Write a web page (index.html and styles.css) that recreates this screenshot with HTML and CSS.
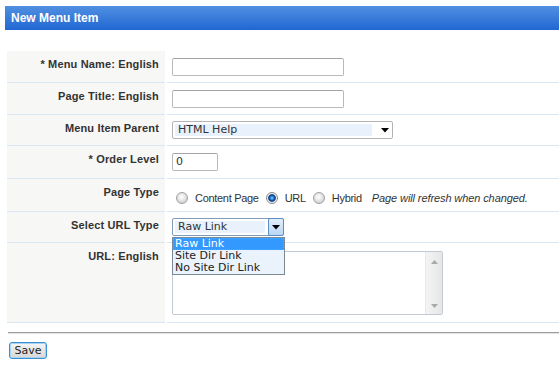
FILE: index.html
```html
<!DOCTYPE html>
<html>
<head>
<meta charset="utf-8">
<link rel="stylesheet" href="styles.css">
</head>
<body>
<div class="page">
  <div class="header">New Menu Item</div>
  <div class="form">
    <div class="label">* Menu Name: English</div>
    <div class="value"><div class="text-input wide"></div></div>

    <div class="label">Page Title: English</div>
    <div class="value"><div class="text-input wide"></div></div>

    <div class="label">Menu Item Parent</div>
    <div class="value">
      <div class="select parent">
        <span class="select-text">HTML Help</span>
        <span class="select-arrow"><svg width="8" height="5" viewBox="0 0 8 5"><path d="M0 0H8L4 4.5Z" fill="#000"/></svg></span>
      </div>
    </div>

    <div class="label">* Order Level</div>
    <div class="value"><div class="text-input short">0</div></div>

    <div class="label">Page Type</div>
    <div class="value radios">
      <span class="radio first"></span><span class="opt">Content Page</span>
      <span class="radio checked"></span><span class="opt">URL</span>
      <span class="radio"></span><span class="opt">Hybrid</span>
      <span class="note">Page will refresh when changed.</span>
    </div>

    <div class="label">Select URL Type</div>
    <div class="value">
      <div class="select url-type">
        <span class="select-text">Raw Link</span>
        <span class="select-arrow boxed"><svg width="8" height="5" viewBox="0 0 8 5"><path d="M0 0H8L4 4.5Z" fill="#000"/></svg></span>
        <div class="dropdown">
          <div class="item active">Raw Link</div>
          <div class="item">Site Dir Link</div>
          <div class="item">No Site Dir Link</div>
        </div>
      </div>
    </div>

    <div class="label">URL: English</div>
    <div class="value top">
      <div class="textarea">
        <div class="scrollbar">
          <svg width="7" height="4" viewBox="0 0 7 4"><path d="M0 4H7L3.5 0Z" fill="#a8a8a8"/></svg>
          <svg width="7" height="4" viewBox="0 0 7 4"><path d="M0 0H7L3.5 4Z" fill="#a8a8a8"/></svg>
        </div>
      </div>
    </div>
  </div>
  <div class="rule"></div>
  <button class="save">Save</button>
</div>
</body>
</html>
```
FILE: styles.css
```css
html, body {
  margin: 0;
  padding: 0;
  background: #fff;
}
body {
  font-family: "Liberation Sans", Arial, sans-serif;
  font-size: 11px;
  color: #333;
}
.page {
  width: 559px;
}
.header {
  margin: 6px 0 0 5px;
  height: 24px;
  line-height: 24px;
  padding-left: 6px;
  background: linear-gradient(#5090e1, #2167d3);
  color: #fff;
  font-weight: bold;
  font-size: 12px;
}
.form {
  margin: 21px 0 0 7px;
  display: grid;
  grid-template-columns: 158px 1fr;
  grid-template-rows: 32px 32px 31px 33px 33px 31px 80px;
  column-gap: 2px;
}
.label, .value {
  box-sizing: border-box;
  border-bottom: 1px solid #dbe6f3;
}
.label {
  background: #f7f7f5;
  text-align: right;
  font-weight: bold;
  line-height: 13px;
  letter-spacing: 0.15px;
  padding: 7px 6px 0 0;
  color: #333;
}
.value {
  display: flex;
  align-items: center;
  padding-left: 5px;
}
.value.top {
  align-items: flex-start;
  padding-top: 8px;
}
.text-input {
  box-sizing: border-box;
  height: 18px;
  border: 1px solid #b8b8b8;
  border-top-color: #a4a4a4;
  border-radius: 2px;
  background: #fff;
  font-family: "DejaVu Sans", Verdana, sans-serif;
  font-size: 11px;
  line-height: 16px;
  padding-left: 3px;
  color: #333;
}
.text-input.wide { width: 172px; }
.text-input.short { width: 46px; }

.select {
  position: relative;
  box-sizing: border-box;
  height: 18px;
  border: 1px solid #b4b4b4;
  border-radius: 2px;
  background: #fff;
  display: flex;
  align-items: center;
  font-family: "DejaVu Sans", Verdana, sans-serif;
  font-size: 11px;
  color: #333;
}
.select-text {
  display: block;
  margin-left: 2px;
  height: 12px;
  line-height: 12px;
  background: #e8f1fc;
  padding-left: 3px;
}
.select.parent { width: 221px; }
.select.parent .select-text { width: 194px; }
.select.parent .select-arrow {
  margin-left: 9px;
  display: flex;
}
.select.url-type {
  width: 112px;
  border-color: #7f9db9;
}
.select.url-type .select-text { width: 87px; }
.select-arrow.boxed {
  box-sizing: border-box;
  width: 16px;
  height: 18px;
  margin-left: auto;
  margin-right: -1px;
  border: 1px solid #5b8ec6;
  border-radius: 2px;
  background: linear-gradient(#e2effb, #b9d7f5);
  display: flex;
  align-items: center;
  justify-content: center;
}
.dropdown {
  position: absolute;
  left: -1px;
  top: 18px;
  box-sizing: border-box;
  width: 113px;
  height: 38px;
  border: 1px solid #7b8896;
  background: #eaf2fb;
  color: #222;
  z-index: 2;
}
.item {
  height: 12px;
  line-height: 12px;
  padding-left: 2px;
  white-space: nowrap;
}
.item.active {
  background: #3399ff;
  color: #fff;
  outline: 1px dotted #d98a3c;
  outline-offset: -1px;
}

.radios {
  padding-top: 6px;
}
.radio {
  box-sizing: border-box;
  width: 12px;
  height: 12px;
  border-radius: 50%;
  border: 1px solid #a0a0a0;
  background: radial-gradient(circle at 45% 40%, #fff 0, #f2f2f2 2px, #d2d2d2 6px);
  margin-left: 7px;
  flex: none;
}
.radio.first { margin-left: 4px; }
.radio.checked {
  border-color: #8a8a8a;
  background: radial-gradient(circle at 50% 50%, #8fd0ff 0, #2a86e0 1.6px, #0b3f86 3px, #3a5f8f 3.6px, #e6ebf0 4.2px, #fff 6px);
}
.opt {
  margin-left: 7px;
  white-space: nowrap;
  letter-spacing: -0.3px;
}
.note {
  margin-left: 10px;
  font-style: italic;
  white-space: nowrap;
  letter-spacing: -0.1px;
}

.textarea {
  box-sizing: border-box;
  width: 271px;
  height: 64px;
  border: 1px solid #c3cad3;
  border-radius: 2px;
  background: #fff;
  display: flex;
  justify-content: flex-end;
}
.scrollbar {
  width: 16px;
  background: linear-gradient(90deg, #f4f4f4, #e6e6e6);
  border-left: 1px solid #e9e9e9;
  display: flex;
  flex-direction: column;
  align-items: center;
  justify-content: space-between;
  padding: 8px 0 6px;
}

.rule {
  margin: 9px 0 0 8px;
  height: 0;
  border-top: 1px solid #9c9c9c;
  border-bottom: 1px solid #e4e4e4;
}
.save {
  display: block;
  margin: 8px 0 0 9px;
  box-sizing: border-box;
  width: 38px;
  height: 17px;
  padding: 0;
  border: 1px solid #3a8fd3;
  border-radius: 3px;
  box-shadow: inset 0 0 0 1px #a8d2f2;
  background: linear-gradient(#f6f6f6, #d6d6d6);
  font-family: "DejaVu Sans", Verdana, sans-serif;
  font-size: 11px;
  color: #222;
  line-height: 14px;
}
```
